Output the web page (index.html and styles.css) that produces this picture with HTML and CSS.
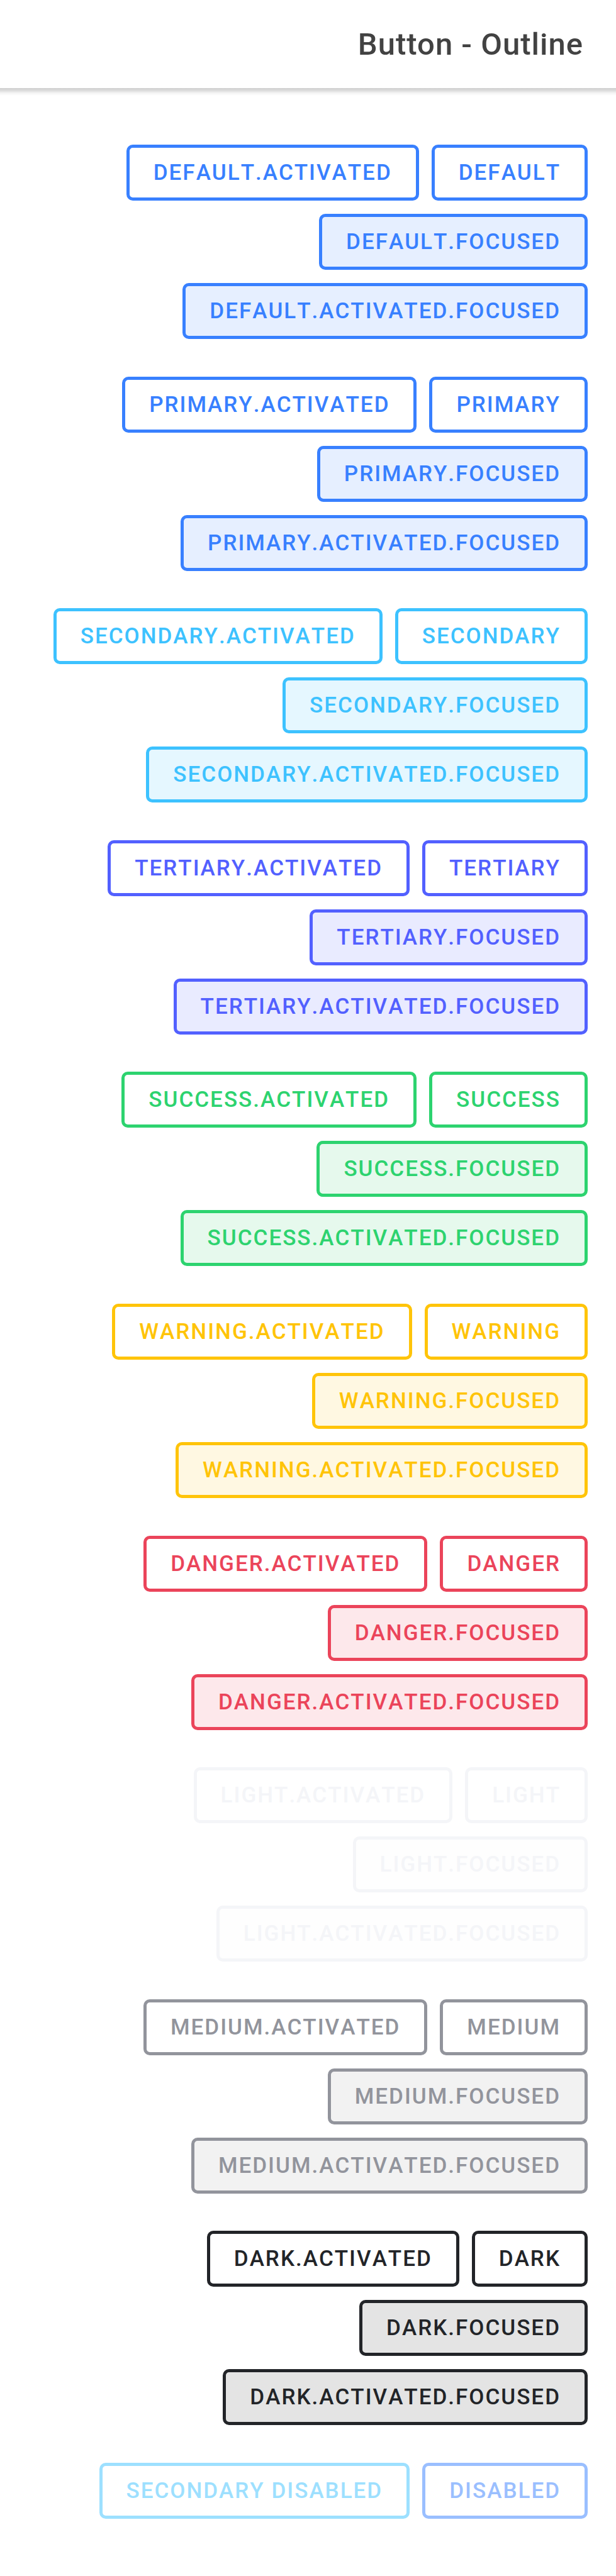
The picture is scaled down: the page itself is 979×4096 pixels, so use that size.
FILE: index.html
```html
<!DOCTYPE html>
<html lang="en" dir="rtl">
<head>
<meta charset="utf-8">
<meta name="viewport" content="width=device-width, initial-scale=1">
<title>Button - Outline</title>
<link rel="stylesheet" href="styles.css">
</head>
<body>
<header class="toolbar"><h1 class="title">Button - Outline</h1></header>
<main class="content">
<section class="group primary">
<div class="row"><button type="button" class="btn">DEFAULT</button><button type="button" class="btn">DEFAULT.ACTIVATED</button></div>
<div class="row"><button type="button" class="btn focused">DEFAULT.FOCUSED</button></div>
<div class="row"><button type="button" class="btn focused">DEFAULT.ACTIVATED.FOCUSED</button></div>
</section>
<section class="group primary">
<div class="row"><button type="button" class="btn">PRIMARY</button><button type="button" class="btn">PRIMARY.ACTIVATED</button></div>
<div class="row"><button type="button" class="btn focused">PRIMARY.FOCUSED</button></div>
<div class="row"><button type="button" class="btn focused">PRIMARY.ACTIVATED.FOCUSED</button></div>
</section>
<section class="group secondary">
<div class="row"><button type="button" class="btn">SECONDARY</button><button type="button" class="btn">SECONDARY.ACTIVATED</button></div>
<div class="row"><button type="button" class="btn focused">SECONDARY.FOCUSED</button></div>
<div class="row"><button type="button" class="btn focused">SECONDARY.ACTIVATED.FOCUSED</button></div>
</section>
<section class="group tertiary">
<div class="row"><button type="button" class="btn">TERTIARY</button><button type="button" class="btn">TERTIARY.ACTIVATED</button></div>
<div class="row"><button type="button" class="btn focused">TERTIARY.FOCUSED</button></div>
<div class="row"><button type="button" class="btn focused">TERTIARY.ACTIVATED.FOCUSED</button></div>
</section>
<section class="group success">
<div class="row"><button type="button" class="btn">SUCCESS</button><button type="button" class="btn">SUCCESS.ACTIVATED</button></div>
<div class="row"><button type="button" class="btn focused">SUCCESS.FOCUSED</button></div>
<div class="row"><button type="button" class="btn focused">SUCCESS.ACTIVATED.FOCUSED</button></div>
</section>
<section class="group warning">
<div class="row"><button type="button" class="btn">WARNING</button><button type="button" class="btn">WARNING.ACTIVATED</button></div>
<div class="row"><button type="button" class="btn focused">WARNING.FOCUSED</button></div>
<div class="row"><button type="button" class="btn focused">WARNING.ACTIVATED.FOCUSED</button></div>
</section>
<section class="group danger">
<div class="row"><button type="button" class="btn">DANGER</button><button type="button" class="btn">DANGER.ACTIVATED</button></div>
<div class="row"><button type="button" class="btn focused">DANGER.FOCUSED</button></div>
<div class="row"><button type="button" class="btn focused">DANGER.ACTIVATED.FOCUSED</button></div>
</section>
<section class="group light">
<div class="row"><button type="button" class="btn">LIGHT</button><button type="button" class="btn">LIGHT.ACTIVATED</button></div>
<div class="row"><button type="button" class="btn focused">LIGHT.FOCUSED</button></div>
<div class="row"><button type="button" class="btn focused">LIGHT.ACTIVATED.FOCUSED</button></div>
</section>
<section class="group medium">
<div class="row"><button type="button" class="btn">MEDIUM</button><button type="button" class="btn">MEDIUM.ACTIVATED</button></div>
<div class="row"><button type="button" class="btn focused">MEDIUM.FOCUSED</button></div>
<div class="row"><button type="button" class="btn focused">MEDIUM.ACTIVATED.FOCUSED</button></div>
</section>
<section class="group dark">
<div class="row"><button type="button" class="btn">DARK</button><button type="button" class="btn">DARK.ACTIVATED</button></div>
<div class="row"><button type="button" class="btn focused">DARK.FOCUSED</button></div>
<div class="row"><button type="button" class="btn focused">DARK.ACTIVATED.FOCUSED</button></div>
</section>
<section class="group">
<div class="row"><button type="button" class="btn primary" disabled>DISABLED</button><button type="button" class="btn secondary" disabled>SECONDARY DISABLED</button></div>
</section>
</main>
</body>
</html>
```

FILE: styles.css
```css
* { box-sizing: border-box; }

body {
  display: flex;
  flex-direction: column;
  min-height: 100vh;
  margin: 0;
  background: #fff;
  font-family: Roboto, "Liberation Sans", sans-serif;
}

.toolbar {
  display: flex;
  align-items: center;
  height: 140px;
  padding: 0 52px;
  position: relative;
}

/* soft shadow hanging below the toolbar */
.toolbar::after {
  content: "";
  position: absolute;
  top: 100%;
  left: 0;
  right: 0;
  height: 12px;
  background: linear-gradient(#cfcfcf, #dcdcdc 33%, #f4f4f4 67%, #fff);
}

.title {
  margin: 0;
  color: #424242;
  font-size: 49px;
  font-weight: 500;
  letter-spacing: 1px;
}

.content {
  display: flex;
  flex: 1;
  flex-direction: column;
  justify-content: space-between;
  padding: 90px 45px 91px;
}

.group {
  display: flex;
  flex-direction: column;
  gap: 21px;
}

.row {
  display: flex;
  gap: 20px;
}

.btn {
  height: 89px;
  padding: 0 38px;
  border: 5px solid var(--color);
  border-radius: 10px;
  background: transparent;
  color: var(--color);
  font-family: inherit;
  font-kerning: none;
  font-size: 35px;
  font-weight: 500;
  letter-spacing: 2px;
  line-height: 1;
  white-space: nowrap;
}

.focused { background: var(--tint); }
.btn:disabled { opacity: 0.5; }

.primary { --color: #3880ff; --tint: #e6efff; }
.secondary { --color: #3dc2ff; --tint: #e5f7ff; }
.tertiary { --color: #5260ff; --tint: #e9ebff; }
.success { --color: #2dd36f; --tint: #e6f9ed; }
.warning { --color: #ffc409; --tint: #fff8e2; }
.danger { --color: #eb445a; --tint: #fde8eb; }
.light { --color: #f4f5f8; --tint: #fefefe; }
.medium { --color: #92949c; --tint: #f2f2f2; }
.dark { --color: #222428; --tint: #e4e4e4; }
```
